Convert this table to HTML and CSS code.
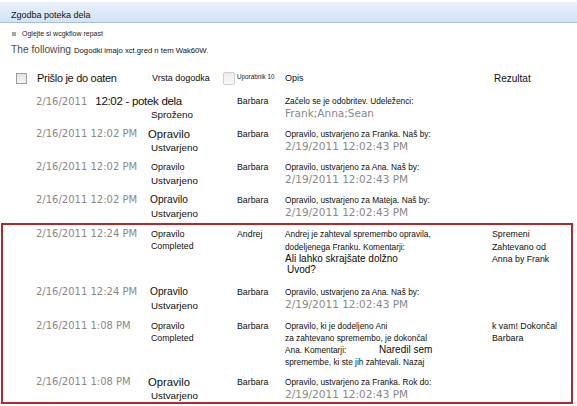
FILE: index.html
```html
<!DOCTYPE html>
<html lang="sl">
<head>
<meta charset="utf-8">
<title>Zgodba poteka dela</title>
<link rel="stylesheet" href="styles.css">
</head>
<body>
<div class="titlebar"><span class="title">Zgodba poteka dela</span></div>
<div class="report-link"><span class="bullet"></span><span>Oglejte si wcgkflow repast</span></div>
<div class="intro"><span class="intro-big">The following</span><span class="intro-small">Dogodki imajo xct.gred n tem Wak60W.</span></div>

<div class="list">
  <div class="head">
    <div class="h-check"><span class="checkbox"></span></div>
    <div class="h-date">Prišlo je do oaten</div>
    <div class="h-type"><span>Vrsta dogodka</span><span class="checkbox light"></span></div>
    <div class="h-user">Uporabnik 10</div>
    <div class="h-desc">Opis</div>
    <div class="h-result">Rezultat</div>
  </div>

  <div class="rows">
    <div class="row">
      <div class="c-date"><span class="date">2/16/2011</span><span class="time-big">12:02 - potek dela</span></div>
      <div class="c-type"><div class="ln">&nbsp;</div><div class="ln-sub t-sub">Sproženo</div></div>
      <div class="c-user"><div class="ln">Barbara</div></div>
      <div class="c-desc"><div class="ln">Začelo se je odobritev. Udeleženci:</div><div class="ln-gray gray-big">Frank;Anna;Sean</div></div>
      <div class="c-result"></div>
    </div>
    <div class="row">
      <div class="c-date"><div class="ln date">2/16/2011 12:02 PM</div></div>
      <div class="c-type"><div class="ln t-main t-lg">Opravilo</div><div class="ln-sub t-sub">Ustvarjeno</div></div>
      <div class="c-user"><div class="ln">Barbara</div></div>
      <div class="c-desc"><div class="ln">Opravilo, ustvarjeno za Franka. Naš by:</div><div class="ln-gray gray-big">2/19/2011 12:02:43 PM</div></div>
      <div class="c-result"></div>
    </div>
    <div class="row">
      <div class="c-date"><div class="ln date">2/16/2011 12:02 PM</div></div>
      <div class="c-type"><div class="ln t-main t-sm">Opravilo</div><div class="ln-sub t-sub">Ustvarjeno</div></div>
      <div class="c-user"><div class="ln">Barbara</div></div>
      <div class="c-desc"><div class="ln">Opravilo, ustvarjeno za Ana. Naš by:</div><div class="ln-gray gray-big">2/19/2011 12:02:43 PM</div></div>
      <div class="c-result"></div>
    </div>
    <div class="row">
      <div class="c-date"><div class="ln date">2/16/2011 12:02 PM</div></div>
      <div class="c-type"><div class="ln t-main t-md">Opravilo</div><div class="ln-sub t-sub">Ustvarjeno</div></div>
      <div class="c-user"><div class="ln">Barbara</div></div>
      <div class="c-desc"><div class="ln">Opravilo, ustvarjeno za Mateja. Naš by:</div><div class="ln-gray gray-big">2/19/2011 12:02:43 PM</div></div>
      <div class="c-result"></div>
    </div>

    <div class="highlight">
      <div class="row tall first-in-box">
        <div class="c-date"><div class="ln date">2/16/2011 12:24 PM</div></div>
        <div class="c-type"><div class="ln t-main t-sm">Opravilo</div><div class="ln-tight t-sub t-small">Completed</div></div>
        <div class="c-user"><div class="ln">Andrej</div></div>
        <div class="c-desc">
          <div class="ln">Andrej je zahteval spremembo opravila,</div>
          <div class="ln-mid">dodeljenega Franku. Komentarji:</div>
          <div class="ln-mid comment">Ali lahko skrajšate dolžno</div>
          <div class="ln-tight comment indent">Uvod?</div>
        </div>
        <div class="c-result">
          <div class="ln">Spremeni</div>
          <div class="ln-mid">Zahtevano od</div>
          <div class="ln-mid">Anna by Frank</div>
        </div>
      </div>
      <div class="row mid">
        <div class="c-date"><div class="ln date">2/16/2011 12:24 PM</div></div>
        <div class="c-type"><div class="ln t-main t-md">Opravilo</div><div class="ln-sub t-sub">Ustvarjeno</div></div>
        <div class="c-user"><div class="ln">Barbara</div></div>
        <div class="c-desc"><div class="ln">Opravilo, ustvarjeno za Ana. Naš by:</div><div class="ln-gray gray-big">2/19/2011 12:02:43 PM</div></div>
        <div class="c-result"></div>
      </div>
      <div class="row tall-b">
        <div class="c-date"><div class="ln date">2/16/2011 1:08 PM</div></div>
        <div class="c-type"><div class="ln t-main t-sm">Opravilo</div><div class="ln-tight t-sub t-small">Completed</div></div>
        <div class="c-user"><div class="ln">Barbara</div></div>
        <div class="c-desc">
          <div class="ln">Opravilo, ki je dodeljeno Ani</div>
          <div class="ln-tight">za zahtevano spremembo, je dokončal</div>
          <div class="ln"><span class="lead">Ana. Komentarji:</span><span class="comment">Naredil sem</span></div>
          <div class="ln-tight">spremembe, ki ste jih zahtevali. Nazaj</div>
        </div>
        <div class="c-result">
          <div class="ln">k vam! Dokončal</div>
          <div class="ln-tight">Barbara</div>
        </div>
      </div>
      <div class="row last">
        <div class="c-date"><div class="ln date">2/16/2011 1:08 PM</div></div>
        <div class="c-type"><div class="ln t-main t-lg">Opravilo</div><div class="ln-sub t-sub">Ustvarjeno</div></div>
        <div class="c-user"><div class="ln">Barbara</div></div>
        <div class="c-desc"><div class="ln">Opravilo, ustvarjeno za Franka. Rok do:</div><div class="ln-gray gray-big">2/19/2011 12:02:43 PM</div></div>
        <div class="c-result"></div>
      </div>
    </div>
  </div>
</div>
</body>
</html>
```
FILE: styles.css
```css
html, body {
  margin: 0;
  padding: 0;
  background: #ffffff;
}

body {
  font-family: "Liberation Sans", Arial, sans-serif;
  color: #0e0e0e;
  font-size: 8.3px;
}

/* title bar */
.titlebar {
  margin-top: 2px;
  height: 16px;
  padding-top: 4px;
  line-height: 18px;
  background: linear-gradient(#e9f1fb, #d4e3f5);
  border-bottom: 1px solid #a9bdd8;
  padding-left: 11px;
}

.title {
  font-size: 9px;
  color: #111;
}

/* link line */
.report-link {
  margin-top: 6px;
  height: 10px;
  line-height: 10px;
  padding-left: 12px;
  display: flex;
  align-items: center;
  font-size: 7px;
  color: #222;
}

.bullet {
  width: 4px;
  height: 4px;
  background: #a8a8a8;
  margin-right: 6px;
}

/* intro */
.intro {
  margin-top: 4px;
  height: 14px;
  line-height: 14px;
  padding-left: 11px;
  white-space: nowrap;
}

.intro-big {
  font-size: 10.2px;
  color: #4a4a4a;
  margin-right: 3px;
}

.intro-small {
  font-size: 7.7px;
  color: #111;
}

/* header */
.head {
  margin-top: 11px;
  height: 20px;
  display: grid;
  grid-template-columns: 36px 112px 89px 48px 208px 1fr;
  align-items: center;
  white-space: nowrap;
}

.h-check {
  padding-left: 16px;
  display: flex;
}

.checkbox {
  display: inline-block;
  width: 9px;
  height: 9px;
  border: 1px solid #9c9c9c;
  background: linear-gradient(#e4e4e4, #f6f6f6);
}

.checkbox.light {
  width: 10px;
  height: 11px;
  border-color: #cfcfcf;
  border-radius: 2px;
  background: linear-gradient(#ececec, #f8f8f8);
}

.h-date {
  padding-left: 1px;
  font-size: 11px;
  letter-spacing: -0.3px;
  color: #111;
}

.h-type {
  display: flex;
  align-items: center;
  justify-content: space-between;
  padding-left: 4px;
  padding-right: 2px;
  font-size: 9px;
}

.h-user {
  font-size: 6.3px;
  margin-top: -3px;
  color: #222;
}

.h-desc {
  font-size: 9px;
}

.h-result {
  padding-left: 1px;
  font-size: 10px;
}

/* rows */
.rows {
  margin-top: 3px;
}

.row {
  box-sizing: border-box;
  height: 33px;
  padding-top: 3px;
  padding-left: 36px;
  display: grid;
  grid-template-columns: 112px 89px 48px 208px 1fr;
  white-space: nowrap;
}

.highlight {
  margin: 0 4px 0 1px;
  border: 2px solid #b3272d;
}

.highlight .row {
  padding-left: 33px;
}

.row.first-in-box {
  padding-top: 2px;
  height: 57px;
}

.row.mid {
  height: 34px;
}

.row.tall-b {
  height: 56px;
}

.row.last {
  height: 30px;
}

.ln {
  line-height: 14px;
}

.ln-sub {
  line-height: 13px;
}

.ln-mid {
  line-height: 12px;
}

.ln-tight {
  line-height: 10px;
}

.ln-gray {
  line-height: 10px;
}

.date {
  font-family: "DejaVu Sans", Verdana, sans-serif;
  font-size: 10px;
  color: #888;
  line-height: 14px;
}

.time-big {
  margin-left: 8px;
  font-size: 11.5px;
  letter-spacing: -0.3px;
  color: #0e0e0e;
  line-height: 14px;
}

.c-type {
  padding-left: 3px;
}

.t-main.t-lg {
  font-size: 11.3px;
  margin-left: -3px;
}

.t-main.t-md {
  font-size: 10.2px;
  margin-left: -1px;
}

.t-main.t-sm {
  font-size: 9px;
}

.t-sub {
  font-size: 9.8px;
}

.t-sub.t-small {
  font-size: 8.8px;
}

.c-user {
  font-size: 8.8px;
}

.gray-big {
  font-family: "DejaVu Sans", Verdana, sans-serif;
  font-size: 10.5px;
  color: #888;
}

.comment {
  font-size: 10px;
  color: #0a0a0a;
}

.indent {
  padding-left: 2px;
}

.lead {
  display: inline-block;
  width: 94px;
}

.c-result {
  margin-left: -1px;
  font-size: 8.8px;
}
```
